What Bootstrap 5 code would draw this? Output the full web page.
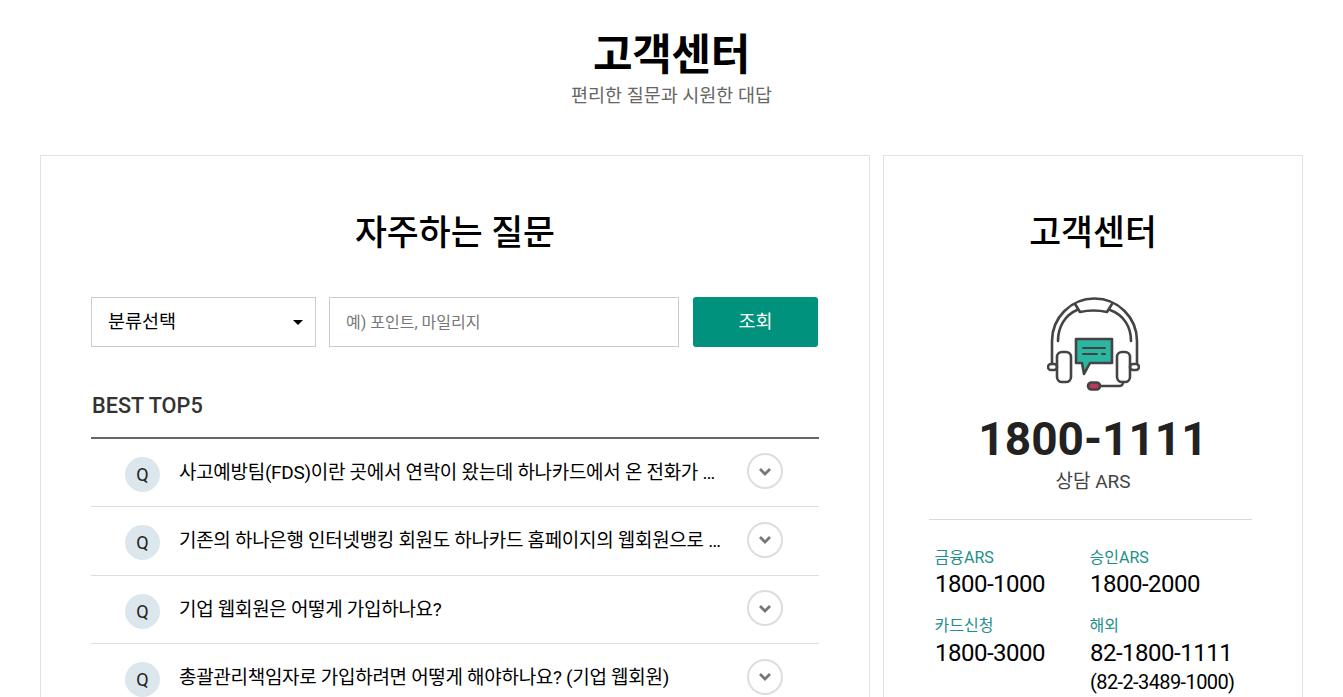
<!doctype html>
<html lang="ko"><head><meta charset="utf-8">
<link href="https://cdn.jsdelivr.net/npm/bootstrap@5.3.0/dist/css/bootstrap.min.css" rel="stylesheet">
<style>
html,body{height:697px;overflow:hidden}
body{font-family:Roboto,"Noto Sans CJK KR",sans-serif;color:#000;background:#fff}
.hero{padding-top:29px;height:155px}
.hero-title{font-size:43px;font-weight:700;line-height:52px;margin:0;letter-spacing:-.3px}
.hero-sub{font-size:18.5px;line-height:26px;color:#666;margin:2px 0 0}
.wrap{padding:0 40px;gap:13px}
.panel{border:1px solid #e2e2e2;height:600px;flex:none}
.panel-l{width:830px;padding:53px 50px 0}
.panel-r{width:420px;padding:53px 45px 0}
.panel-title{font-size:34.700px;font-weight:500;line-height:48px;margin:0;text-align:center}
.search{margin-top:40px;gap:13px;width:728px}
.pick{width:225px;height:50px;border:1px solid #ccc;padding:2px 12px 0 16px;font-size:18.5px}
.caret-dn{border-left:5px solid transparent;border-right:5px solid transparent;border-top:5px solid #000;margin-top:-2px}
.kw{width:350px;height:50px;border:1px solid #ccc;padding:2px 16px 0;font-size:16px;color:#777;margin-right:1px}
.go{width:125px;height:50px;background:#00927c;color:#fff;font-size:18.5px;border-radius:3px;border:0;padding-top:2px}
.best{font-size:21.700px;font-weight:500;line-height:28px;margin:45px 0 17px;color:#333;padding-left:1px}
.faq{width:728px;border-top:2px solid #666;margin:0;padding:0;list-style:none}
.faq-row{height:68.5px;border-bottom:1px solid #ddd;padding:0 37px 0 34px}
.faq-row:nth-child(odd){height:68px}
.faq-row:nth-child(even){height:69px}
.q-mark{width:35px;height:35px;border-radius:50%;background:#dce6ed;font-size:18px;flex:none;color:#222;margin-top:3px}
.q-text{font-size:19px;line-height:26px;width:546px;margin-left:19px;flex:none;white-space:nowrap;overflow:hidden;text-overflow:ellipsis;letter-spacing:-.3px;margin-top:0}
.open-btn{width:36px;height:36px;border:2px solid #ddd;border-radius:50%;margin-left:22px;margin-top:-3px;flex:none;background:#fff}
.tel-big{font-size:46px;font-weight:700;line-height:54px;color:#222;text-align:center;margin:21px 0 0}
.tel-cap{font-size:19px;color:#444;line-height:26px;text-align:center;margin:3px 0 24px}
.ico-box{margin-top:40px;height:94px}
.tel-list{border-top:1px solid #d8d8d8;padding:25px 6px 0;margin-right:5px;display:grid;grid-template-columns:155px 1fr;row-gap:15px}
.tel-l{font-size:16px;line-height:26px;height:26px;color:#1c9089;margin-left:-.5px}
.tel-n{font-size:24px;line-height:28px;letter-spacing:-.5px;margin-top:-1px}
.tel-b .tel-n{margin-top:0}
.tel-s{font-size:20px;line-height:31px;letter-spacing:-.6px}
</style></head><body>
<header class="hero text-center">
<h1 class="hero-title">고객센터</h1>
<p class="hero-sub">편리한 질문과 시원한 대답</p>
</header>
<main class="wrap d-flex">
<section class="panel panel-l">
<h2 class="panel-title">자주하는 질문</h2>
<div class="search d-flex">
<div class="pick d-flex align-items-center justify-content-between"><span>분류선택</span><span class="caret-dn"></span></div>
<div class="kw d-flex align-items-center">예) 포인트, 마일리지</div>
<button class="go" type="button">조회</button>
</div>
<h3 class="best">BEST TOP5</h3>
<ul class="faq">
<li class="faq-row d-flex align-items-center"><span class="q-mark d-flex align-items-center justify-content-center">Q</span><span class="q-text">사고예방팀(FDS)이란 곳에서 연락이 왔는데 하나카드에서 온 전화가 맞나요? 확인 부탁드립니다</span><span class="open-btn d-flex align-items-center justify-content-center"><svg width="14" height="9" viewBox="0 0 14 9"><path d="M2 2l5 5 5-5" fill="none" stroke="#777" stroke-width="2.8"/></svg></span></li>
<li class="faq-row d-flex align-items-center"><span class="q-mark d-flex align-items-center justify-content-center">Q</span><span class="q-text">기존의 하나은행 인터넷뱅킹 회원도 하나카드 홈페이지의 웹회원으로 가입해야 하나요? 네 맞습니다</span><span class="open-btn d-flex align-items-center justify-content-center"><svg width="14" height="9" viewBox="0 0 14 9"><path d="M2 2l5 5 5-5" fill="none" stroke="#777" stroke-width="2.8"/></svg></span></li>
<li class="faq-row d-flex align-items-center"><span class="q-mark d-flex align-items-center justify-content-center">Q</span><span class="q-text">기업 웹회원은 어떻게 가입하나요?</span><span class="open-btn d-flex align-items-center justify-content-center"><svg width="14" height="9" viewBox="0 0 14 9"><path d="M2 2l5 5 5-5" fill="none" stroke="#777" stroke-width="2.8"/></svg></span></li>
<li class="faq-row d-flex align-items-center"><span class="q-mark d-flex align-items-center justify-content-center">Q</span><span class="q-text">총괄관리책임자로 가입하려면 어떻게 해야하나요? (기업 웹회원)</span><span class="open-btn d-flex align-items-center justify-content-center"><svg width="14" height="9" viewBox="0 0 14 9"><path d="M2 2l5 5 5-5" fill="none" stroke="#777" stroke-width="2.8"/></svg></span></li>
</ul>
</section>
<aside class="panel panel-r">
<h2 class="panel-title">고객센터</h2>
<div class="ico-box d-flex justify-content-center">
<svg width="93" height="94" viewBox="0 0 93 94" fill="none" stroke="#444" stroke-width="2.600" stroke-linejoin="round" stroke-linecap="round">
<path d="M5 67V44a42 42 0 0 1 85 0v23"/>
<path d="M11 44C11 30 18 18 30 13M84 44C84 30 77 18 63 13"/>
<path d="M28 7l5 8c9-2 18-2 27 0l5-8"/>
<rect x="10" y="55" width="14" height="30" rx="5"/>
<rect x="70" y="55" width="13" height="30" rx="5"/>
<rect x="1" y="67" width="9" height="6" rx="3"/>
<rect x="83" y="67" width="9" height="6" rx="3"/>
<path d="M29 42h36v24H43l-6 11-2-11h-6z" fill="#2cb5a0"/>
<path d="M36 51h22M36 57h14M55 57h3" stroke-width="2"/>
<path d="M76 85c0 3-1 4-4 4H53"/>
<rect x="41" y="85.500" width="12" height="7" rx="3.500" fill="#c0395c"/>
</svg>
</div>
<p class="tel-big">1800-1111</p>
<p class="tel-cap">상담 ARS</p>
<div class="tel-list">
<div><div class="tel-l">금융ARS</div><div class="tel-n">1800-1000</div></div>
<div><div class="tel-l">승인ARS</div><div class="tel-n">1800-2000</div></div>
<div class="tel-b"><div class="tel-l">카드신청</div><div class="tel-n">1800-3000</div></div>
<div class="tel-b"><div class="tel-l">해외</div><div class="tel-n">82-1800-1111</div><div class="tel-s">(82-2-3489-1000)</div></div>
</div>
</aside>
</main>
<script src="https://cdn.jsdelivr.net/npm/bootstrap@5.3.0/dist/js/bootstrap.bundle.min.js"></script>
</body></html>
